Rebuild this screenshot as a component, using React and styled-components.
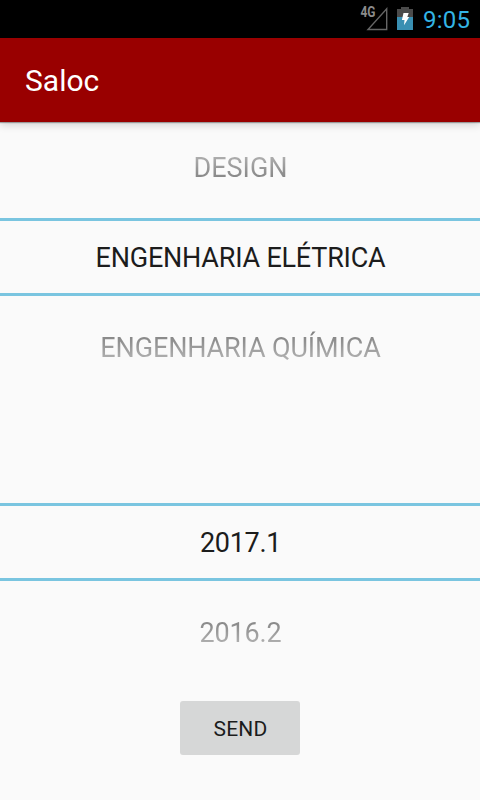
import React from 'react';
import styled, { createGlobalStyle, css, ThemeProvider } from 'styled-components';

const theme = {
  colors: {
    primary: '#990000',
    accent: '#7ac5e0',
    status: '#33b5e5',
    background: '#fafafa',
    button: '#d6d7d7',
    text: '#1c1c1c',
  },
};

const GlobalStyle = createGlobalStyle`
  * {
    box-sizing: border-box;
  }
  body {
    margin: 0;
    background: ${theme.colors.background};
    font-family: Roboto, sans-serif;
  }
`;

const Screen = styled.div`
  display: flex;
  flex-direction: column;
  width: 480px;
  height: 800px;
  overflow: hidden;
  color: ${({ theme }) => theme.colors.text};
  background: ${({ theme }) => theme.colors.background};
`;

const StatusBar = styled.div`
  display: flex;
  flex: none;
  justify-content: flex-end;
  height: 38px;
  padding-right: 10px;
  background: #000;
`;

const Clock = styled.span`
  width: 47px;
  margin-left: 10px;
  font-size: 24px;
  line-height: 40px;
  letter-spacing: .2px;
  white-space: nowrap;
  color: ${({ theme }) => theme.colors.status};
`;

const Toolbar = styled.header`
  display: flex;
  flex: none;
  align-items: center;
  height: 84px;
  padding: 2px 0 0 25px;
  background: ${({ theme }) => theme.colors.primary};
  box-shadow: 0 1px 1px rgba(0, 0, 0, .3), 0 3px 8px rgba(0, 0, 0, .16);
`;

const Title = styled.h1`
  margin: 0;
  font-size: 30px;
  font-weight: 400;
  line-height: 36px;
  color: #fff;
`;

const Content = styled.main`
  display: flex;
  flex-direction: column;
  align-items: center;
`;

const Picker = styled.div`
  width: 100%;
  height: 270px;
  margin-bottom: 15px;
`;

const getOptionState = (selected, above) => {
  if (selected) {
    return css`
      height: 78px;
      margin: 6px 0;
      border-top: 3px solid ${({ theme }) => theme.colors.accent};
      border-bottom: 3px solid ${({ theme }) => theme.colors.accent};
    `;
  }
  return css`
    height: 90px;
    mask-image: linear-gradient(${above ? 'to bottom' : 'to top'}, rgba(0, 0, 0, .06), rgba(0, 0, 0, .8));
  `;
};

const Option = styled.div`
  display: flex;
  align-items: center;
  justify-content: center;
  padding: 2px 0 0 1px;
  font-size: 27px;
  line-height: 32px;
  letter-spacing: ${({ $spacing = 0 }) => $spacing}px;
  white-space: nowrap;
  ${({ $selected, $above }) => getOptionState($selected, $above)}
`;

const Button = styled.button`
  width: 120px;
  height: 54px;
  margin-top: 9px;
  padding: 2px 0 0 1px;
  border: 0;
  border-radius: 3px;
  font-family: inherit;
  font-size: 21px;
  letter-spacing: .2px;
  color: inherit;
  background: ${({ theme }) => theme.colors.button};
`;

const StatusIcons = () => (
  <svg width="53" height="38" viewBox="360 0 53 38">
    <text x="360.5" y="17.3" fontSize="14" fontWeight="700" fill="#8c8c8c" textLength="15" lengthAdjust="spacingAndGlyphs">4G</text>
    <path d="M368 29.5H386.7V8.8Z" fill="none" stroke="#666" strokeWidth="1.4" />
    <path d="M401 7h8v2h4v9h-16V9h4z" fill="#4b4b4b" />
    <path d="M397 17h16v13h-16z" fill="#398fb2" />
    <path d="M403.5 13h5.2l-1.4 4h1.9l-5.2 8.3 .5-5.3h-2.6z" fill="#fff" />
  </svg>
);

const App = () => (
  <ThemeProvider theme={theme}>
    <GlobalStyle />
    <Screen>
      <StatusBar>
        <StatusIcons />
        <Clock>9:05</Clock>
      </StatusBar>
      <Toolbar>
        <Title>Saloc</Title>
      </Toolbar>
      <Content>
        <Picker>
          <Option $above>DESIGN</Option>
          <Option $selected $spacing={-0.22}>ENGENHARIA ELÉTRICA</Option>
          <Option $spacing={-0.14}>ENGENHARIA QUÍMICA</Option>
        </Picker>
        <Picker>
          <Option $above />
          <Option $selected $spacing={-0.3}>2017.1</Option>
          <Option $spacing={-0.2}>2016.2</Option>
        </Picker>
        <Button>SEND</Button>
      </Content>
    </Screen>
  </ThemeProvider>
);

export default App;
